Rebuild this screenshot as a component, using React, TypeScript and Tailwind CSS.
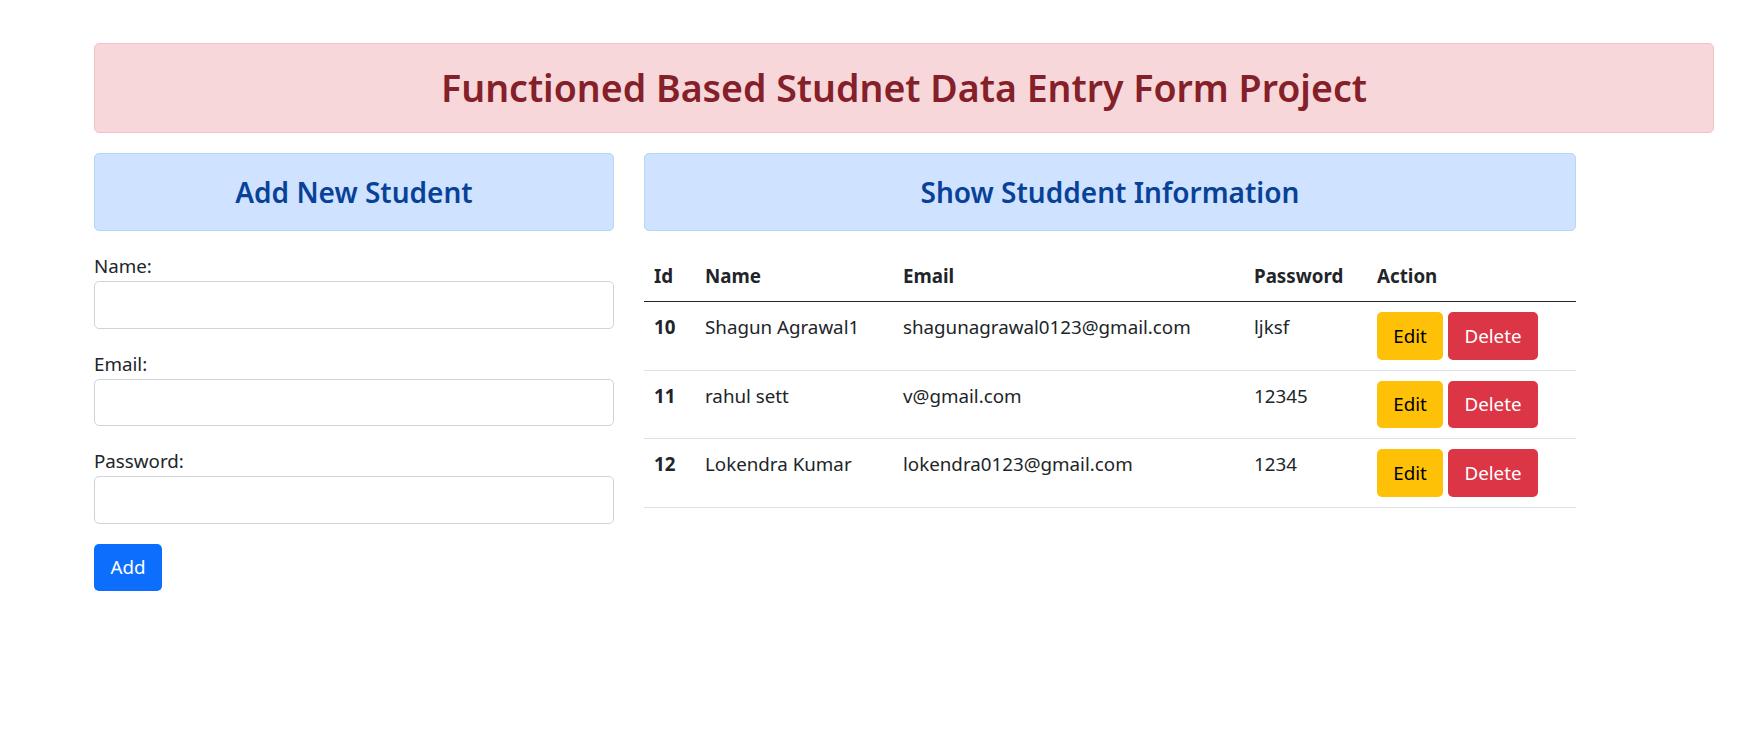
import React, { useState } from 'react';

type Student = {
  id: number;
  name: string;
  email: string;
  password: string;
};

const initialStudents: Student[] = [
  { id: 10, name: 'Shagun Agrawal1', email: 'shagunagrawal0123@gmail.com', password: 'ljksf' },
  { id: 11, name: 'rahul sett', email: 'v@gmail.com', password: '12345' },
  { id: 12, name: 'Lokendra Kumar', email: 'lokendra0123@gmail.com', password: '1234' },
];

export default function App() {
  const [students, setStudents] = useState<Student[]>(initialStudents);
  const [name, setName] = useState('');
  const [email, setEmail] = useState('');
  const [password, setPassword] = useState('');

  const handleAdd = (e: React.FormEvent) => {
    e.preventDefault();
    if (!name) return;
    const nextId = students.length ? students[students.length - 1].id + 1 : 1;
    setStudents([...students, { id: nextId, name, email, password }]);
    setName('');
    setEmail('');
    setPassword('');
  };

  const handleDelete = (id: number) => {
    setStudents(students.filter((s) => s.id !== id));
  };

  return (
    <div className="min-h-screen bg-white text-[#212529] font-['Segoe_UI','Noto_Sans','Open_Sans',sans-serif] text-[18.75px] leading-[30px]">
      <div className="ml-[94px] w-[1620px] pt-[43px]">
        {/* Title */}
        <div className="bg-[#f8d7da] border border-[#f5c2c7] rounded-[5px] py-5 mb-5">
          <h2 className="text-center text-[37.5px] leading-[48px] font-semibold text-[#842029]">
            Functioned Based Studnet Data Entry Form Project
          </h2>
        </div>

        <div className="flex gap-[30px]">
          {/* Add form */}
          <div className="w-[520px]">
            <div className="bg-[#cfe2ff] border border-[#b6d4fe] rounded-[5px] py-5">
              <h4 className="text-center text-[28px] leading-[36px] font-semibold text-[#084298]">Add New Student</h4>
            </div>
            <form onSubmit={handleAdd} className="mt-5">
              <div className="mb-5">
                <label className="block">Name:</label>
                <input
                  type="text"
                  value={name}
                  onChange={(e) => setName(e.target.value)}
                  className="block w-full h-[47.5px] px-[15px] border border-[#ced4da] rounded-[5px] outline-none"
                />
              </div>
              <div className="mb-5">
                <label className="block">Email:</label>
                <input
                  type="email"
                  value={email}
                  onChange={(e) => setEmail(e.target.value)}
                  className="block w-full h-[47.5px] px-[15px] border border-[#ced4da] rounded-[5px] outline-none"
                />
              </div>
              <div className="mb-5">
                <label className="block">Password:</label>
                <input
                  type="password"
                  value={password}
                  onChange={(e) => setPassword(e.target.value)}
                  className="block w-full h-[47.5px] px-[15px] border border-[#ced4da] rounded-[5px] outline-none"
                />
              </div>
              <button type="submit" className="w-[68px] h-[47px] bg-[#0d6efd] text-white rounded-[5px]">
                Add
              </button>
            </form>
          </div>

          {/* Table */}
          <div className="w-[932px]">
            <div className="bg-[#cfe2ff] border border-[#b6d4fe] rounded-[5px] py-5">
              <h4 className="text-center text-[28px] leading-[36px] font-semibold text-[#084298]">Show Studdent Information</h4>
            </div>
            <table className="mt-5 w-full table-fixed border-collapse">
              <thead>
                <tr className="border-b border-[#212529]">
                  <th className="w-[51px] p-[10px] text-left font-bold">Id</th>
                  <th className="w-[198px] p-[10px] text-left font-bold">Name</th>
                  <th className="w-[351px] p-[10px] text-left font-bold">Email</th>
                  <th className="w-[123px] p-[10px] text-left font-bold">Password</th>
                  <th className="p-[10px] text-left font-bold">Action</th>
                </tr>
              </thead>
              <tbody>
                {students.map((s) => (
                  <tr key={s.id} className="border-b border-[#dee2e6]">
                    <td className="p-[10px] align-top font-bold">{s.id}</td>
                    <td className="p-[10px] align-top">{s.name}</td>
                    <td className="p-[10px] align-top">{s.email}</td>
                    <td className="p-[10px] align-top">{s.password}</td>
                    <td className="p-[10px] align-top">
                      <div className="flex gap-[5px]">
                        <button className="w-[66px] h-[47.5px] bg-[#ffc107] text-black rounded-[5px]">Edit</button>
                        <button
                          onClick={() => handleDelete(s.id)}
                          className="w-[90px] h-[47.5px] bg-[#dc3545] text-white rounded-[5px]"
                        >
                          Delete
                        </button>
                      </div>
                    </td>
                  </tr>
                ))}
              </tbody>
            </table>
          </div>
        </div>
      </div>
    </div>
  );
}
